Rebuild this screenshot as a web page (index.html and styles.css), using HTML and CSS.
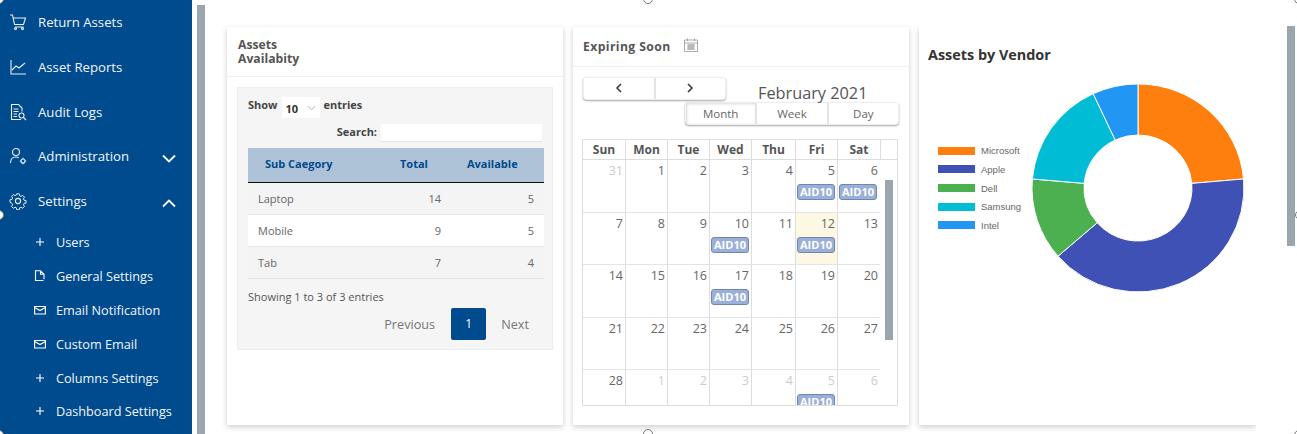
FILE: index.html
```html
<!DOCTYPE html>
<html>

<head>
    <title>Dashboard</title>
    <link rel="stylesheet" href="styles.css">
</head>

<body>
    <div class="app">
        <nav class="sidebar">
            <a class="nav-item">
                <svg class="nav-icon" viewBox="0 0 18 18"><path d="M1 2h2.500l2 9.500h9L16.500 5H4.200M6 14h8.500"/><circle cx="6.500" cy="15.500" r="1"/><circle cx="13.500" cy="15.500" r="1"/></svg>
                <span>Return Assets</span>
            </a>
            <a class="nav-item">
                <svg class="nav-icon" viewBox="0 0 18 18"><path d="M2 2v14h15M3 12l4-4 3 2 6-5"/></svg>
                <span>Asset Reports</span>
            </a>
            <a class="nav-item">
                <svg class="nav-icon" viewBox="0 0 18 18"><path d="M12 16.500H2.500V1.500h7l3.500 3.500v3.500M4.500 6h5M4.500 8.500h5M4.500 11h3.500M4.500 13.500h3.500"/><circle cx="12.500" cy="12.500" r="2.500"/><path d="M14.500 14.500l2.500 2.500"/></svg>
                <span>Audit Logs</span>
            </a>
            <a class="nav-item">
                <svg class="nav-icon" viewBox="0 0 18 18"><circle cx="7" cy="5" r="3.500"/><path d="M1.500 16c0-4 2.500-6 5.500-6 1 0 2 .2 2.800.7"/><circle cx="14" cy="14" r="2"/><path d="M14 10.800v1.200M14 16v1.200M10.800 14H12M16 14h1.200"/></svg>
                <span>Administration</span>
                <svg class="chevron" viewBox="0 0 14 9"><path d="M1 1.500l6 6 6-6"/></svg>
            </a>
            <a class="nav-item">
                <svg class="nav-icon" viewBox="0 0 18 18"><circle cx="9" cy="9" r="2.600"/><path d="M7.600 1h2.800l.4 2.200 1.500.7 1.900-1.200 2 2-1.200 1.900.7 1.500 2.200.4v2.800l-2.200.4-.7 1.500 1.200 1.900-2 2-1.900-1.200-1.500.7-.4 2.200H7.600l-.4-2.200-1.500-.7-1.900 1.200-2-2 1.200-1.900-.7-1.500L.1 10.400V7.600l2.200-.4.7-1.500L1.800 3.800l2-2 1.900 1.200 1.500-.7z" transform="translate(.9 .9) scale(.9)"/></svg>
                <span>Settings</span>
                <svg class="chevron" viewBox="0 0 14 9"><path d="M1 7.500l6-6 6 6"/></svg>
            </a>
            <div class="sub-nav">
                <a class="sub-item">
                    <svg class="sub-icon" viewBox="0 0 12 12"><path d="M6 2v8M2 6h8"/></svg>
                    <span>Users</span>
                </a>
                <a class="sub-item">
                    <svg class="sub-icon" viewBox="0 0 12 12"><path d="M9.500 10.500H1.500V.8h5l3.500 3.500v5M6.500.8v3.500H10"/></svg>
                    <span>General Settings</span>
                </a>
                <a class="sub-item">
                    <svg class="sub-icon" viewBox="0 0 12 12"><path d="M.6 2.500h10.800v7.500H.6zM.6 3.500L6 6.500l5.400-3"/></svg>
                    <span>Email Notification</span>
                </a>
                <a class="sub-item">
                    <svg class="sub-icon" viewBox="0 0 12 12"><path d="M.6 2.500h10.800v7.500H.6zM.6 3.500L6 6.500l5.400-3"/></svg>
                    <span>Custom Email</span>
                </a>
                <a class="sub-item">
                    <svg class="sub-icon" viewBox="0 0 12 12"><path d="M6 2v8M2 6h8"/></svg>
                    <span>Columns Settings</span>
                </a>
                <a class="sub-item">
                    <svg class="sub-icon" viewBox="0 0 12 12"><path d="M6 2v8M2 6h8"/></svg>
                    <span>Dashboard Settings</span>
                </a>
            </div>
        </nav>

        <div class="side-scroll"></div>

        <main class="cards">
            <section class="card">
                <div class="card-head assets-head">Assets<br>Availabity</div>
                <div class="panel">
                    <div class="length-row">
                        <span>Show</span>
                        <span class="length-select">10
                            <svg viewBox="0 0 10 6"><path d="M1 1l4 4 4-4"/></svg>
                        </span>
                        <span>entries</span>
                    </div>
                    <div class="search-row">
                        <span>Search:</span>
                        <span class="search-box"></span>
                    </div>
                    <table class="assets-table">
                        <thead>
                            <tr>
                                <th class="col-name">Sub Caegory</th>
                                <th class="col-total">Total</th>
                                <th class="col-avail">Available</th>
                            </tr>
                        </thead>
                        <tbody>
                            <tr>
                                <td>Laptop</td>
                                <td class="num">14</td>
                                <td class="num">5</td>
                            </tr>
                            <tr>
                                <td>Mobile</td>
                                <td class="num">9</td>
                                <td class="num">5</td>
                            </tr>
                            <tr>
                                <td>Tab</td>
                                <td class="num">7</td>
                                <td class="num">4</td>
                            </tr>
                        </tbody>
                    </table>
                    <div class="table-info">Showing 1 to 3 of 3 entries</div>
                    <div class="pager">
                        <span class="page-link">Previous</span>
                        <span class="page-current">1</span>
                        <span class="page-link">Next</span>
                    </div>
                </div>
            </section>

            <section class="card">
                <div class="card-head expiring-head">
                    <span>Expiring Soon</span>
                    <svg class="cal-icon" viewBox="0 0 14 14"><path d="M.5 2h13v11.500H.5zM.5 5h13M3.500.5v2.500M10.500.5v2.500M3 7h8M3 9h8M3 11h8M5 6v6M7 6v6M9 6v6"/></svg>
                </div>
                <div class="cal-toolbar">
                    <div class="cal-top">
                        <div class="btn-group nav-group">
                            <button class="cal-btn">
                                <svg viewBox="0 0 8 10"><path d="M6 1L2 5l4 4"/></svg>
                            </button>
                            <button class="cal-btn">
                                <svg viewBox="0 0 8 10"><path d="M2 1l4 4-4 4"/></svg>
                            </button>
                        </div>
                        <div class="cal-title">February 2021</div>
                    </div>
                    <div class="btn-group view-group">
                        <button class="cal-btn active">Month</button>
                        <button class="cal-btn">Week</button>
                        <button class="cal-btn">Day</button>
                    </div>
                </div>

                <div class="calendar">
                    <div class="cal-head">
                        <div>Sun</div>
                        <div>Mon</div>
                        <div>Tue</div>
                        <div>Wed</div>
                        <div>Thu</div>
                        <div>Fri</div>
                        <div>Sat</div>
                        <div></div>
                    </div>
                    <div class="cal-body">
                        <div class="cal-week">
                            <div class="day other">31</div>
                            <div class="day">1</div>
                            <div class="day">2</div>
                            <div class="day">3</div>
                            <div class="day">4</div>
                            <div class="day">5<span class="event">AID10</span></div>
                            <div class="day">6<span class="event">AID10</span></div>
                        </div>
                        <div class="cal-week">
                            <div class="day">7</div>
                            <div class="day">8</div>
                            <div class="day">9</div>
                            <div class="day">10<span class="event">AID10</span></div>
                            <div class="day">11</div>
                            <div class="day today">12<span class="event">AID10</span></div>
                            <div class="day">13</div>
                        </div>
                        <div class="cal-week">
                            <div class="day">14</div>
                            <div class="day">15</div>
                            <div class="day">16</div>
                            <div class="day">17<span class="event">AID10</span></div>
                            <div class="day">18</div>
                            <div class="day">19</div>
                            <div class="day">20</div>
                        </div>
                        <div class="cal-week">
                            <div class="day">21</div>
                            <div class="day">22</div>
                            <div class="day">23</div>
                            <div class="day">24</div>
                            <div class="day">25</div>
                            <div class="day">26</div>
                            <div class="day">27</div>
                        </div>
                        <div class="cal-week">
                            <div class="day">28</div>
                            <div class="day other">1</div>
                            <div class="day other">2</div>
                            <div class="day other">3</div>
                            <div class="day other">4</div>
                            <div class="day other">5<span class="event">AID10</span></div>
                            <div class="day other">6</div>
                        </div>
                        <div class="cal-scroll"></div>
                    </div>
                </div>
            </section>

            <section class="card vendor-card">
                <h3 class="vendor-title">Assets by Vendor</h3>
                <div class="chart">
                    <ul class="legend">
                        <li><i class="swatch orange"></i>Microsoft</li>
                        <li><i class="swatch indigo"></i>Apple</li>
                        <li><i class="swatch green"></i>Dell</li>
                        <li><i class="swatch cyan"></i>Samsung</li>
                        <li><i class="swatch blue"></i>Intel</li>
                    </ul>
                    <svg class="donut" viewBox="0 0 216 216" preserveAspectRatio="none">
                        <path fill="#ff7f0e" d="M108 2A106 106 0 0 1 213.600 98.800L161.800 103.300A54 54 0 0 0 108 54Z"/>
                        <path fill="#3f51b5" d="M213.600 98.800A106 106 0 0 1 28 177.500L67.200 143.400A54 54 0 0 0 161.800 103.300Z"/>
                        <path fill="#4caf50" d="M28 177.500A106 106 0 0 1 2.400 98.800L54.200 103.300A54 54 0 0 0 67.200 143.400Z"/>
                        <path fill="#00bcd4" d="M2.400 98.800A106 106 0 0 1 63.200 11.900L85.200 59.100A54 54 0 0 0 54.200 103.300Z"/>
                        <path fill="#2196f3" d="M63.200 11.900A106 106 0 0 1 108 2L108 54A54 54 0 0 0 85.200 59.100Z"/>
                    </svg>
                </div>
            </section>
        </main>

        <div class="page-scroll"></div>

        <!-- resize handles -->
        <span class="handle h-tl"></span>
        <span class="handle h-t"></span>
        <span class="handle h-tr"></span>
        <span class="handle h-l"></span>
        <span class="handle h-r"></span>
        <span class="handle h-bl"></span>
        <span class="handle h-b"></span>
        <span class="handle h-br"></span>
    </div>
</body>

</html>
```

FILE: styles.css
```css
body {
    margin: 0px;
    background-color: white;
    font-family: "Open Sans", "Noto Sans", sans-serif;
    color: #555;
}

.app {
    position: relative;
    display: flex;
    width: 1297px;
    height: 434px;
    overflow: hidden;
}

/* sidebar */
.sidebar {
    flex: none;
    width: 192px;
    height: 434px;
    background-color: #004b8d;
    color: #f2f6fa;
}

.nav-item {
    display: flex;
    align-items: center;
    height: 44.7px;
    font-size: 13.2px;
}

.nav-icon {
    flex: none;
    width: 18px;
    height: 18px;
    margin-left: 9px;
    margin-right: 11px;
    fill: none;
    stroke: #e8eff6;
    stroke-width: 1.1;
}

.chevron {
    width: 14px;
    height: 9px;
    margin-left: auto;
    margin-right: 16px;
    margin-top: 4px;
    fill: none;
    stroke: white;
    stroke-width: 1.8;
}

.sub-nav {
    padding-top: 2px;
}

.sub-item {
    display: flex;
    align-items: center;
    height: 33.8px;
    font-size: 12.7px;
}

.sub-icon {
    flex: none;
    width: 12px;
    height: 12px;
    margin-left: 34px;
    margin-right: 10px;
    fill: none;
    stroke: white;
    stroke-width: 1.1;
}

.side-scroll {
    flex: none;
    width: 8px;
    margin-left: 5px;
    margin-top: 5px;
    background-color: #9aa5ae;
}

/* cards */
.cards {
    display: flex;
    gap: 10px;
    margin-left: 22px;
    padding-top: 27px;
}

.card {
    width: 336px;
    height: 398px;
    background-color: white;
    box-shadow: 0px 2px 6px rgba(0, 0, 0, 0.2);
}

.card-head {
    font-size: 12.2px;
    font-weight: 700;
    color: #555;
    border-bottom: 1px solid #f0f0f0;
}

.assets-head {
    height: 38px;
    padding: 11px 11px 0px;
    line-height: 14px;
}

.panel {
    height: 261px;
    margin: 10px 10px 0px;
    padding: 0px 10px;
    background-color: #f5f5f5;
    border: 1px solid #eeeeee;
    font-size: 11px;
}

.length-row {
    display: flex;
    align-items: flex-start;
    gap: 4px;
    height: 21px;
    margin-top: 9px;
    line-height: 15px;
    font-weight: 700;
    color: #444;
}

.length-select {
    display: flex;
    align-items: center;
    justify-content: space-between;
    width: 38px;
    height: 21px;
    padding: 1px 4px 0px;
    box-sizing: border-box;
    background-color: white;
    color: #333;
}

.length-select svg {
    width: 9px;
    height: 6px;
    fill: none;
    stroke: #aaa;
}

.search-row {
    display: flex;
    justify-content: flex-end;
    align-items: flex-start;
    gap: 4px;
    height: 18px;
    margin-top: 6px;
    line-height: 16px;
    font-weight: 700;
    color: #444;
}

.search-box {
    width: 161px;
    height: 18px;
    box-sizing: border-box;
    background-color: white;
    border-bottom: 1px solid #e2e2e2;
}

.assets-table {
    width: 296px;
    margin-top: 6px;
    border-collapse: collapse;
    table-layout: fixed;
    font-size: 11px;
}

.assets-table th {
    height: 34px;
    padding: 0px 0px 2px;
    box-sizing: border-box;
    background-color: #aec3d8;
    border-bottom: 1px solid #111;
    color: #004b8d;
    font-size: 11px;
    text-align: left;
}

.col-name {
    width: 138px;
    text-indent: 17px;
}

.col-total {
    width: 65px;
    text-indent: 14px;
}

.col-avail {
    text-indent: 16px;
}

.assets-table td {
    height: 31px;
    padding: 0px 10px;
    border-bottom: 1px solid #e6e6e6;
    color: #666;
}

.assets-table tbody tr:nth-child(odd) {
    background-color: #f4f4f4;
}

.assets-table tbody tr:nth-child(even) {
    background-color: white;
}

.assets-table td.num {
    text-align: right;
}

.table-info {
    margin-top: 10px;
    height: 15px;
    line-height: 15px;
    color: #555;
}

.pager {
    display: flex;
    justify-content: flex-end;
    align-items: center;
    margin-top: 4px;
    padding-right: 13px;
    font-size: 12.7px;
    color: #777;
}

.page-current {
    width: 35px;
    height: 32px;
    margin: 0px 15px 0px 16px;
    border-radius: 2px;
    background-color: #004b8d;
    color: white;
    font-size: 12px;
    line-height: 32px;
    text-align: center;
}

/* calendar */
.expiring-head {
    display: flex;
    align-items: center;
    height: 39px;
    padding-left: 10px;
    letter-spacing: 0.4px;
}

.cal-icon {
    width: 14px;
    height: 14px;
    margin-left: 13px;
    margin-bottom: 4px;
    fill: none;
    stroke: #888;
    stroke-width: 0.7;
}

.cal-toolbar {
    padding: 10px 10px 0px;
}

.cal-top {
    display: flex;
    height: 25px;
}

.cal-title {
    margin-left: 32px;
    margin-top: 4px;
    font-size: 16.3px;
    line-height: 24px;
    color: #555;
}

.btn-group {
    display: flex;
    height: 23px;
    box-sizing: border-box;
    border: 1px solid #eeeeee;
    border-radius: 4px;
    background-color: white;
    box-shadow: 0px 1px 2px rgba(0, 0, 0, 0.35);
}

.nav-group {
    width: 143px;
}

.view-group {
    width: 214px;
    margin-left: 102px;
}

.cal-btn {
    flex: 1;
    padding: 0px;
    border: 0px;
    border-right: 2px solid #e4e4e4;
    background-color: white;
    color: #666;
    font-family: "Open Sans", "Noto Sans", sans-serif;
    font-size: 11.5px;
}

.cal-btn:last-child {
    border-right: 0px;
}

.cal-btn svg {
    width: 8px;
    height: 10px;
    fill: none;
    stroke: #333;
    stroke-width: 1.5;
}

.cal-btn.active {
    box-shadow: inset 1px 1px 3px rgba(0, 0, 0, 0.15);
}

.calendar {
    width: 314px;
    height: 265px;
    margin: 14px 0px 0px 9px;
    border: 1px solid #dddddd;
}

.cal-head {
    display: grid;
    grid-template-columns: 43px 42px 42px 42px 44px 42px 43px 1fr;
    height: 19px;
    border-bottom: 1px solid #dddddd;
    font-size: 12px;
    font-weight: 700;
    line-height: 19px;
    text-align: center;
    color: #555;
}

.cal-head div {
    border-right: 1px solid #dddddd;
}

.cal-head div:last-child {
    border-right: 0px;
}

.cal-body {
    position: relative;
    height: 245px;
    overflow: hidden;
}

.cal-week {
    display: grid;
    grid-template-columns: 43px 42px 42px 42px 44px 42px 42px;
    width: 297px;
    height: 52.5px;
    box-sizing: border-box;
    border-bottom: 1px solid #e4e4e4;
}

.day {
    padding: 2px 2px 0px 0px;
    border-right: 1px solid #dddddd;
    font-size: 12.5px;
    line-height: 17px;
    text-align: right;
    color: #666;
}

.day:last-child {
    border-right: 0px;
}

.day.other {
    color: #ccc;
}

.day.today {
    background-color: #fcf8e3;
}

.event {
    display: block;
    width: 38px;
    height: 16px;
    margin: 5px 0px 0px 1px;
    box-sizing: border-box;
    border: 1px solid #7286a8;
    border-radius: 3px;
    background-color: #9ab0da;
    color: white;
    font-size: 11px;
    font-weight: 700;
    line-height: 14px;
    text-align: center;
}

.cal-scroll {
    position: absolute;
    top: 20px;
    right: 4px;
    width: 8px;
    height: 160px;
    background-color: #9aa5ae;
}

/* vendor chart */
.vendor-card {
    width: 337px;
    height: 398px;
    clip-path: inset(0px 0px -8px -8px);
}

.vendor-title {
    margin: 0px;
    padding: 18px 0px 0px 9px;
    font-size: 14.4px;
    line-height: 19px;
    font-weight: 700;
    color: #333;
}

.chart {
    display: flex;
    align-items: center;
    padding-left: 19px;
    margin-top: 18px;
}

.legend {
    width: 93px;
    margin: 0px;
    padding: 0px;
    list-style: none;
    font-family: "Liberation Sans", Arial, sans-serif;
    font-size: 9.5px;
    color: #666;
}

.legend li {
    display: flex;
    align-items: center;
    height: 18.7px;
    white-space: nowrap;
}

.swatch {
    flex: none;
    width: 37px;
    height: 8px;
    margin-right: 6px;
}

.orange {
    background-color: #ff7f0e;
}

.indigo {
    background-color: #3f51b5;
}

.green {
    background-color: #4caf50;
}

.cyan {
    background-color: #00bcd4;
}

.blue {
    background-color: #2196f3;
}

.donut {
    flex: none;
    width: 216px;
    height: 212px;
    margin-left: -1px;
}

.donut path {
    stroke: white;
    stroke-width: 1;
}

.page-scroll {
    position: absolute;
    top: 26px;
    left: 1287px;
    width: 8px;
    height: 220px;
    background-color: #9aa5ae;
}

/* resize handles */
.handle {
    position: absolute;
    width: 10px;
    height: 10px;
    box-sizing: border-box;
    border: 1.5px solid #777;
    border-radius: 50%;
    background-color: white;
}

.h-tl {
    left: -6px;
    top: -6px;
}

.h-t {
    left: 643px;
    top: -6px;
}

.h-tr {
    left: 1294px;
    top: -6px;
}

.h-l {
    left: -6px;
    top: 210px;
}

.h-r {
    left: 1295px;
    top: 210px;
}

.h-bl {
    left: -6px;
    top: 430px;
}

.h-b {
    left: 643px;
    top: 429px;
}

.h-br {
    left: 1294px;
    top: 430px;
}
```
